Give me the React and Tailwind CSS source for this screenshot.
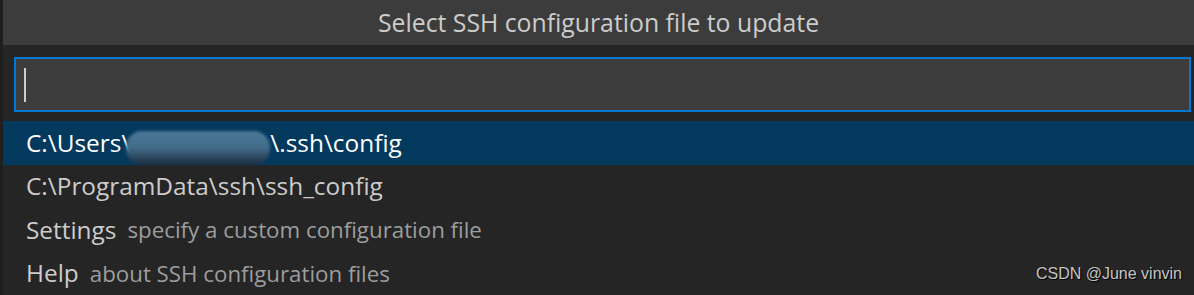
import React from 'react';

const font = { fontFamily: '"Open Sans", "Noto Sans", sans-serif' };

const Row = ({ label, desc, selected, children }) => (
  <div
    className={`h-[44px] flex items-center pl-[23px] ${selected ? 'bg-[#04395e] text-white' : 'text-[#cccccc]'}`}
  >
    {children || <span className="text-[24.4px]">{label}</span>}
    {desc && <span className="ml-[11px] text-[22.3px] text-[#9d9d9d]">{desc}</span>}
  </div>
);

const App = () => {
  return (
    <div className="w-[1194px] h-[295px] bg-[#1e1e1e] pl-[3px] overflow-hidden" style={font}>
      <div className="h-full bg-[#252526] flex flex-col relative">
        {/* Title */}
        <div className="h-[46px] bg-[#3c3c3c] flex items-center justify-center text-[#cccccc] text-[24.8px] pb-[1px]">
          Select SSH configuration file to update
        </div>

        {/* Input */}
        <div className="pt-[12px] pb-[9px] pl-[11px] pr-[3px]">
          <div className="h-[55px] border-2 border-[#0078d4] bg-[#3c3c3c] flex items-center pl-[8px]">
            <div className="w-[2px] h-[34px] bg-[#cccccc]" />
          </div>
        </div>

        {/* List */}
        <Row selected>
          <span className="text-[24.4px] flex items-center">
            C:\Users\
            <span className="inline-block w-[144px] h-[34px] mt-[9px] -ml-[4px] rounded-[16px] bg-gradient-to-b from-[#4b7898] via-[#426b8a] to-[#1b2d3e] blur-[1.5px]" />
            \.ssh\config
          </span>
        </Row>
        <Row label="C:\ProgramData\ssh\ssh_config" />
        <Row label="Settings" desc="specify a custom configuration file" />
        <Row label="Help" desc="about SSH configuration files" />

        <div
          className="absolute right-[12px] bottom-[9px] text-[16px] text-[#c4c4c4] [text-shadow:1px_1px_1px_#000]"
          style={{ fontFamily: '"Liberation Sans", Arial, sans-serif' }}
        >
          CSDN @June vinvin
        </div>
      </div>
    </div>
  );
};

export default App;
